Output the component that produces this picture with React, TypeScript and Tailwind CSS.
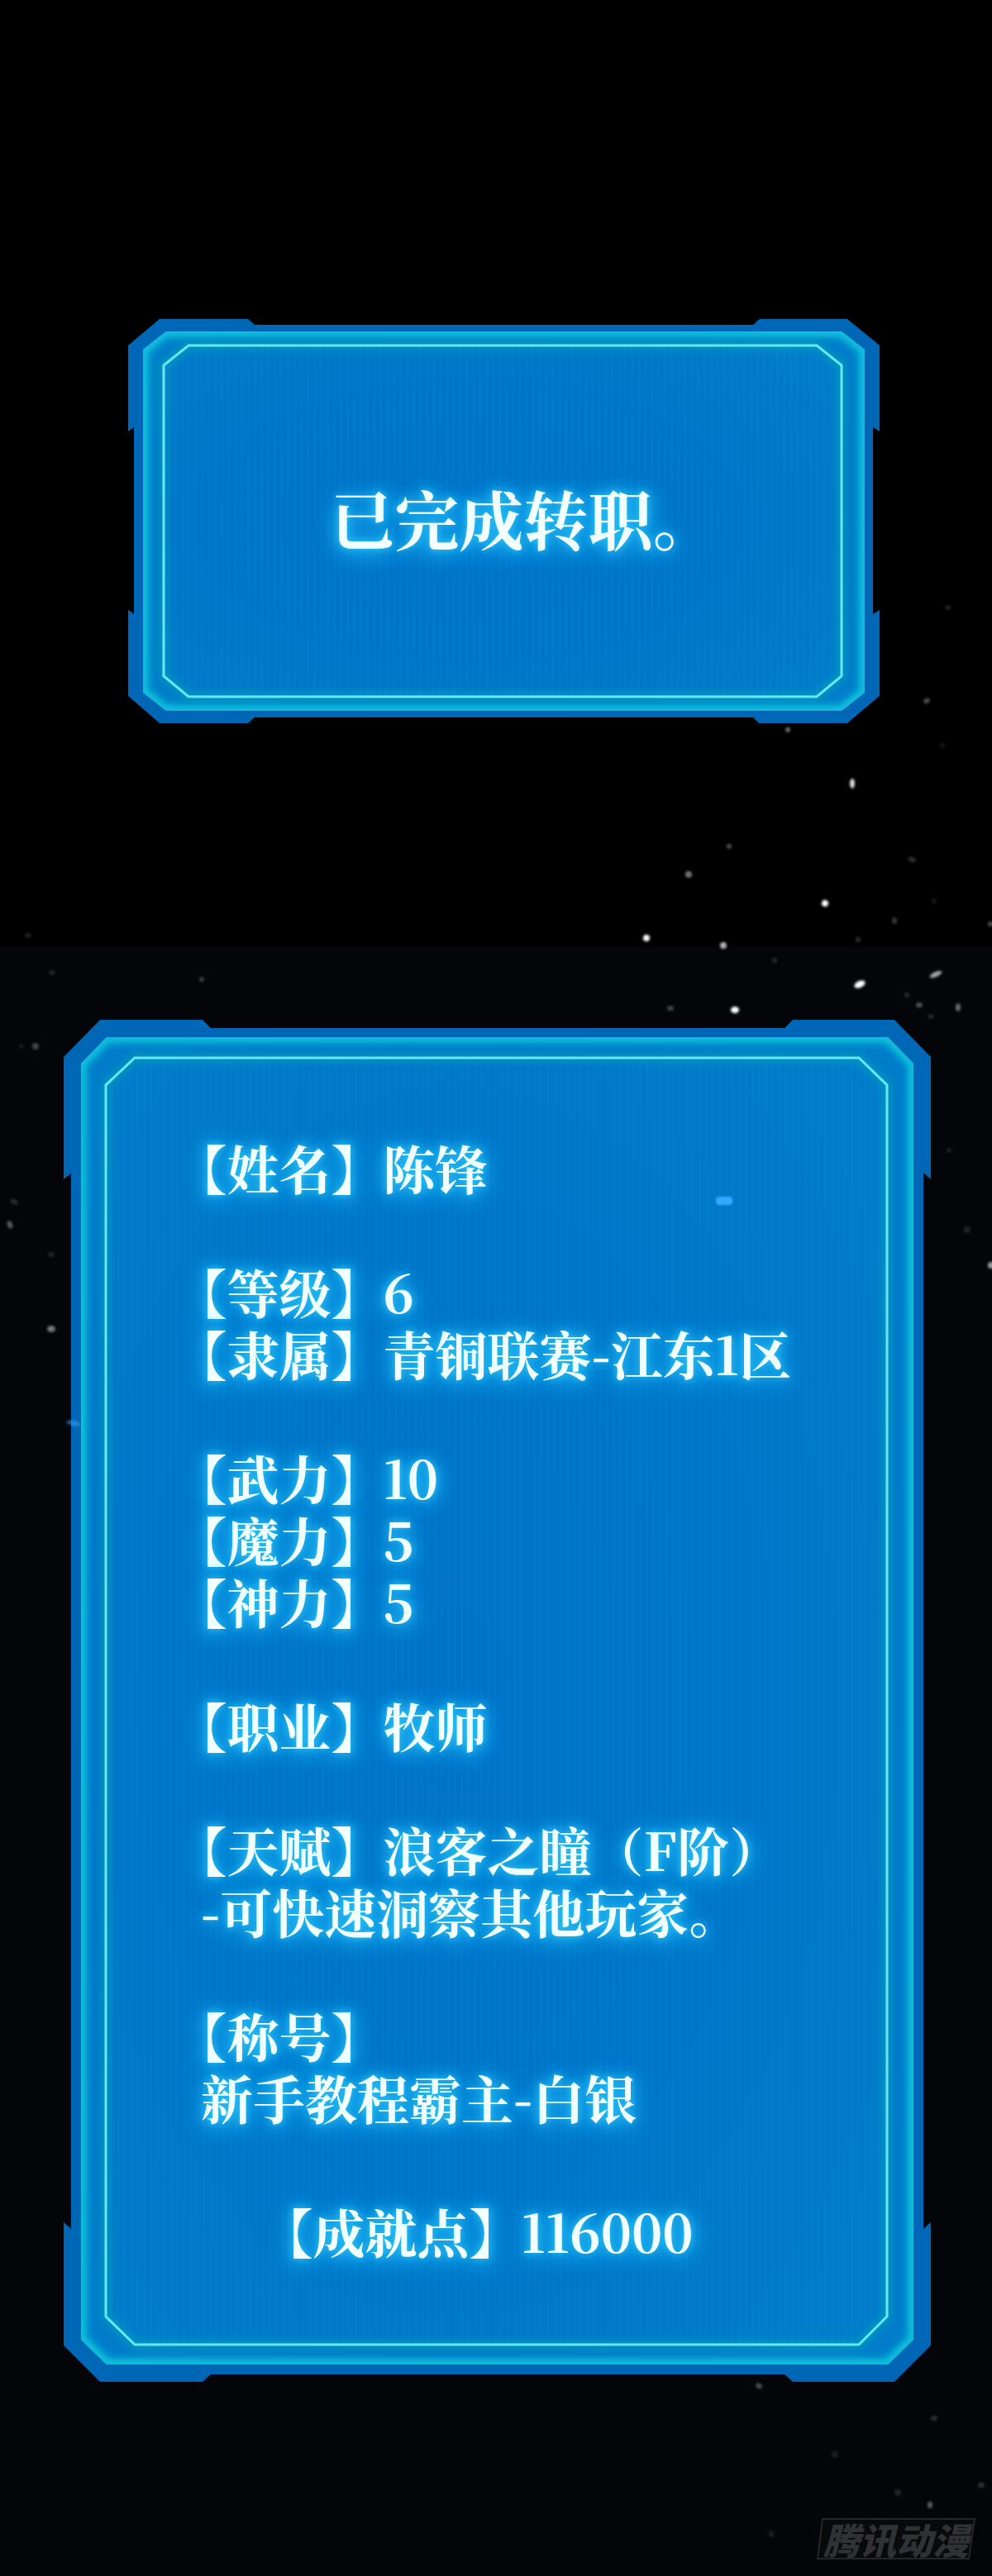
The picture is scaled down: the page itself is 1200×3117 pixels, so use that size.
type Star = [x: number, y: number, rx: number, ry: number, rotate: number, opacity: number];

const stars: Star[] = [
  [1147, 735, 3, 3, 0, 0.14],
  [1121, 848, 4, 3, -30, 0.3],
  [953, 883, 3, 3, 0, 0.42],
  [1031, 948, 3, 6, 0, 0.85],
  [1140, 902, 3, 3, 0, 0.08],
  [882, 1024, 3, 3, 0, 0.3],
  [833, 1058, 4, 4, 0, 0.45],
  [1103, 1040, 5, 3, 20, 0.18],
  [998, 1093, 4, 4, 30, 1],
  [1082, 1114, 3, 4, 0, 0.22],
  [1130, 1090, 3, 3, 0, 0.1],
  [1038, 1137, 3, 3, 0, 0.18],
  [875, 1144, 4, 4, 0, 0.7],
  [782, 1135, 4, 4, 20, 1],
  [937, 1162, 3, 3, 0, 0.14],
  [1132, 1179, 8, 3, -25, 0.65],
  [1040, 1191, 7, 4, -25, 1],
  [811, 1220, 4, 3, 0, 0.25],
  [889, 1222, 5, 4, 0, 1],
  [1097, 1204, 3, 3, 0, 0.15],
  [1112, 1216, 4, 3, 0, 0.3],
  [1159, 1219, 3, 5, 0, 0.4],
  [1126, 1230, 3, 3, 0, 0.15],
  [1148, 1392, 3, 3, 0, 0.1],
  [1170, 1488, 4, 4, 0, 0.12],
  [1199, 1531, 4, 4, 0, 0.6],
  [1198, 1118, 3, 3, 0, 0.3],
  [34, 1132, 4, 3, 0, 0.12],
  [63, 1177, 4, 3, 0, 0.12],
  [244, 1185, 3, 3, 0, 0.22],
  [43, 1266, 4, 4, 0, 0.25],
  [26, 1266, 3, 3, 0, 0.08],
  [17, 1454, 5, 3, 30, 0.15],
  [12, 1482, 3, 5, -20, 0.35],
  [62, 1518, 4, 3, 0, 0.12],
  [62, 1608, 5, 4, 0, 0.45],
  [918, 2887, 4, 3, 30, 0.3],
  [1130, 2926, 4, 3, 0, 0.16],
  [1010, 2970, 4, 4, 0, 0.1],
  [1086, 3016, 4, 4, 0, 0.12],
  [1187, 3007, 4, 3, 0, 0.18],
  [1125, 3031, 3, 4, 0, 0.35],
  [933, 3066, 3, 4, 0, 0.1],
];

const StarField = () => (
  <svg
    aria-hidden="true"
    className="absolute inset-0 size-full pointer-events-none"
    viewBox="0 0 1200 3117"
    preserveAspectRatio="xMaxYMin slice"
  >
    <defs>
      <filter id="star-blur" x="-100%" y="-100%" width="300%" height="300%">
        <feGaussianBlur stdDeviation="1.6" />
      </filter>
    </defs>
    {stars.map(([x, y, rx, ry, rotate, opacity]) => (
      <ellipse
        key={`${x}-${y}`}
        cx={x}
        cy={y}
        rx={rx}
        ry={ry}
        fill="#fff"
        opacity={opacity}
        filter="url(#star-blur)"
        transform={`rotate(${rotate} ${x} ${y})`}
      />
    ))}
    <ellipse cx="89" cy="1722" rx="9" ry="3" fill="#3f9cf0" opacity="0.6" filter="url(#star-blur)" transform="rotate(12 89 1722)" />
  </svg>
);

type FrameProps = {
  id: string;
  width: number;
  height: number;
  outer: string;
  edge: string;
  line: string;
};

const Frame = ({ id, width, height, outer, edge, line }: FrameProps) => (
  <svg
    aria-hidden="true"
    className="absolute inset-0 size-full"
    viewBox={`0 0 ${width} ${height}`}
    preserveAspectRatio="none"
  >
    <defs>
      <radialGradient id={`${id}-fill`} cx="0.45" cy="0.5" r="0.62">
        <stop offset="0" stopColor="#0073c7" />
        <stop offset="0.6" stopColor="#0076c8" />
        <stop offset="1" stopColor="#007cc9" />
      </radialGradient>
      <pattern id={`${id}-scan`} width="8" height="8" patternUnits="userSpaceOnUse">
        <rect width="3" height="8" fill="#0a8ad6" opacity="0.18" />
      </pattern>
      <filter id={`${id}-glow`} x="-5%" y="-5%" width="110%" height="110%">
        <feGaussianBlur stdDeviation="5" />
      </filter>
      <clipPath id={`${id}-clip`}>
        <polygon points={edge} />
      </clipPath>
    </defs>
    <polygon points={outer} fill="#0067b6" />
    <polygon points={edge} fill={`url(#${id}-fill)`} />
    <g clipPath={`url(#${id}-clip)`}>
      <polygon points={edge} fill="none" stroke="#0cc4dc" strokeWidth="14" filter={`url(#${id}-glow)`} />
      <polygon points={edge} fill="none" stroke="#14bade" strokeWidth="4" />
    </g>
    <polygon points={line} fill={`url(#${id}-scan)`} />
    <polygon points={line} fill="none" stroke="#06a8b8" strokeWidth="9" opacity="0.7" filter={`url(#${id}-glow)`} />
    <polygon points={line} fill="none" stroke="#6ae6f6" strokeWidth="3" />
  </svg>
);

type LineProps = {
  label?: string;
  value?: string;
};

const Line = ({ label, value }: LineProps) => (
  <p>
    {label && `【${label}】`}
    {value}
  </p>
);

const groups: LineProps[][] = [
  [{ label: "姓名", value: "陈锋" }],
  [
    { label: "等级", value: "6" },
    { label: "隶属", value: "青铜联赛-江东1区" },
  ],
  [
    { label: "武力", value: "10" },
    { label: "魔力", value: "5" },
    { label: "神力", value: "5" },
  ],
  [{ label: "职业", value: "牧师" }],
  [{ label: "天赋", value: "浪客之瞳（F阶）" }, { value: "-可快速洞察其他玩家。" }],
  [{ label: "称号" }, { value: "新手教程霸主-白银" }],
];

const glow =
  "text-[#f2ffff] font-bold font-['Noto_Serif_CJK_SC','Noto_Sans_CJK_SC',serif] [font-kerning:none] [text-shadow:0_0_8px_#2cc4f4,0_0_18px_#1cb0f0,0_4px_26px_#18a8f0,0_4px_30px_#18a8f0]";

const NoticePanel = () => (
  <section className="bg-black pt-[386px] pb-[271px] pl-[155px] pr-[136px]">
    <div className="relative pt-[201px] pb-[210px] pl-12">
      <Frame
        id="notice"
        width={909}
        height={489}
        outer="38,0 145,0 153,7 756,7 764,0 870,0 909,32 909,136 901,131 901,357 909,352 909,456 870,489 763,489 756,482 153,482 145,489 38,489 0,456 0,352 7,357 7,131 0,136 0,32"
        edge="46,15 863,15 891,37 891,452 863,474 46,474 18,452 18,37"
        line="73,32 833,32 863,56 863,432 833,457 73,457 43,432 43,56"
      />
      <h1 lang="zh-CN" className={`relative text-center text-[78px] leading-[78px] ${glow}`}>
        已完成转职。
      </h1>
    </div>
  </section>
);

const StatusPanel = () => (
  <section className="bg-[#040509] pt-[88px] pb-[235px] pl-[77px] pr-[74px]">
    <div className="relative pt-[140px] pb-[146px] pl-[166px] pr-16">
      <Frame
        id="status"
        width={1049}
        height={1648}
        outer="44,0 168,0 178,10 872,10 882,0 1005,0 1049,45 1049,193 1040,185 1040,1463 1049,1455 1049,1604 1005,1648 882,1648 872,1639 178,1639 168,1648 44,1648 0,1604 0,1455 9,1463 9,186 0,193 0,45"
        edge="52,21 997,21 1028,53 1028,1597 997,1627 52,1627 21,1597 21,53"
        line="86,46 962,46 996,79 996,1569 962,1603 86,1603 51,1569 51,79"
      />
      <div
        lang="zh-CN"
        className={`relative flex flex-col gap-[75px] text-[63px] leading-[75px] [text-spacing-trim:trim-start] ${glow}`}
      >
        {groups.map((lines, i) => (
          <div key={i}>
            {lines.map((line) => (
              <Line key={line.label ?? line.value} {...line} />
            ))}
          </div>
        ))}
        <div className="pl-[104px] pt-3">
          <Line label="成就点" value="116000" />
        </div>
      </div>
      <span className="absolute top-[214px] right-60 w-5 h-[10px] rounded-sm bg-[#35a8ff] blur-[1px]" />
    </div>
  </section>
);

const Watermark = () => (
  <div className="absolute right-5 bottom-5 h-[50px] w-[192px] flex items-center justify-center">
    <svg aria-hidden="true" className="absolute inset-0 size-full" viewBox="0 0 192 50">
      <polygon points="7,1 191,1 184,49 1,49" fill="#08090b" stroke="#25262a" strokeWidth="2" />
    </svg>
    <span
      lang="zh-CN"
      className="relative text-[44px] leading-[48px] italic font-black text-[#303135] font-['Noto_Sans_CJK_SC',sans-serif]"
    >
      腾讯动漫
    </span>
  </div>
);

const App = () => {
  return (
    <main className="relative overflow-hidden bg-[#040509]">
      <NoticePanel />
      <StatusPanel />
      <StarField />
      <Watermark />
    </main>
  );
};

export default App;
